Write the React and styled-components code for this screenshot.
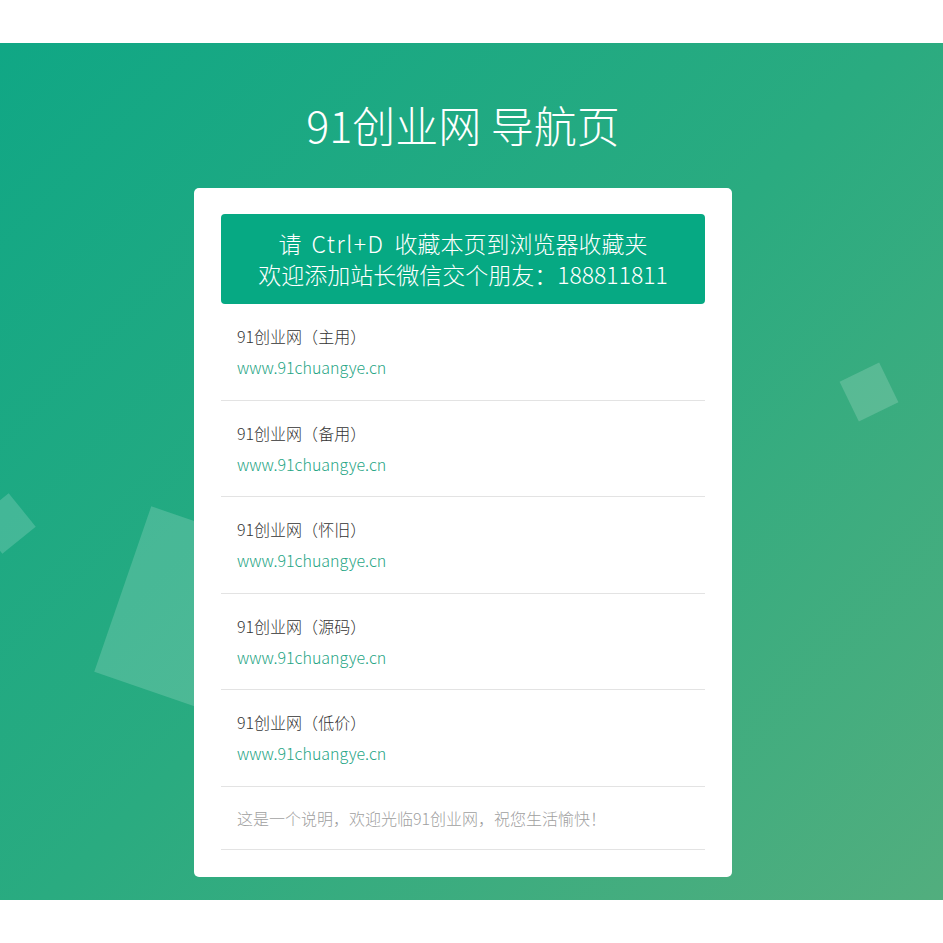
import styled, { createGlobalStyle } from 'styled-components';

const GlobalStyle = createGlobalStyle`
  body {
    margin: 0;
    background: #fff;
    font-family: "Noto Sans CJK SC", "Noto Sans", sans-serif;
  }
`;

const Page = styled.div`
  padding: 43px 0 43px;
`;

const Band = styled.section`
  position: relative;
  overflow: hidden;
  display: flex;
  flex-direction: column;
  align-items: center;
  padding: 53px 17px 23px 0;
  background: linear-gradient(135deg, #10a785 0%, #2aab80 50%, #52ae7e 100%);
`;

const Shape = styled.div`
  position: absolute;
  left: ${(p) => p.$left}px;
  top: ${(p) => p.$top}px;
  width: ${(p) => p.$size}px;
  height: ${(p) => p.$size}px;
  transform: rotate(${(p) => p.$rotate}deg);
  background: rgba(255, 255, 255, 0.17);
`;

const Title = styled.h1`
  position: relative;
  margin: 0 0 36px;
  color: #fff;
  font-size: 43px;
  line-height: 56px;
  font-weight: 300;
`;

const Card = styled.div`
  position: relative;
  width: 484px;
  padding: 26px 27px 27px;
  background: #fff;
  border-radius: 5px;
`;

const Banner = styled.div`
  padding: 14px 0;
  background: #06a983;
  border-radius: 4px;
  color: #fff;
  text-align: center;
  font-size: 23px;
  line-height: 31px;
  font-weight: 300;
`;

const Keys = styled.span`
  margin: 0 5px;
  letter-spacing: 1.5px;
`;

const Item = styled.div`
  padding: 17px 16px 16.5px;
  border-bottom: 1px solid #e3e3e3;
  line-height: 31px;
  font-weight: 300;
`;

const ItemName = styled.div`
  color: #333;
  font-size: 16px;
`;

const ItemLink = styled.a`
  display: block;
  color: #1fa585;
  font-size: 16px;
  text-decoration: none;
`;

const Note = styled.div`
  padding: 16px 16px 15px;
  border-bottom: 1px solid #e3e3e3;
  color: #a0a0a0;
  font-size: 16px;
  line-height: 31px;
  font-weight: 300;
`;

const sites = ['主用', '备用', '怀旧', '源码', '低价'];

export default function App() {
  return (
    <Page>
      <GlobalStyle />
      <Band>
        <Shape $left={-16} $top={459} $size={43} $rotate={51} />
        <Shape $left={118} $top={487} $size={175} $rotate={19} />
        <Shape $left={847} $top={327} $size={44} $rotate={-26} />
        <Title>91创业网 导航页</Title>
        <Card>
          <Banner>
            请 <Keys>Ctrl+D</Keys> 收藏本页到浏览器收藏夹
            <br />
            欢迎添加站长微信交个朋友：188811811
          </Banner>
          {sites.map((s) => (
            <Item key={s}>
              <ItemName>91创业网（{s}）</ItemName>
              <ItemLink href="#">www.91chuangye.cn</ItemLink>
            </Item>
          ))}
          <Note>这是一个说明，欢迎光临91创业网，祝您生活愉快！</Note>
        </Card>
      </Band>
    </Page>
  );
}
